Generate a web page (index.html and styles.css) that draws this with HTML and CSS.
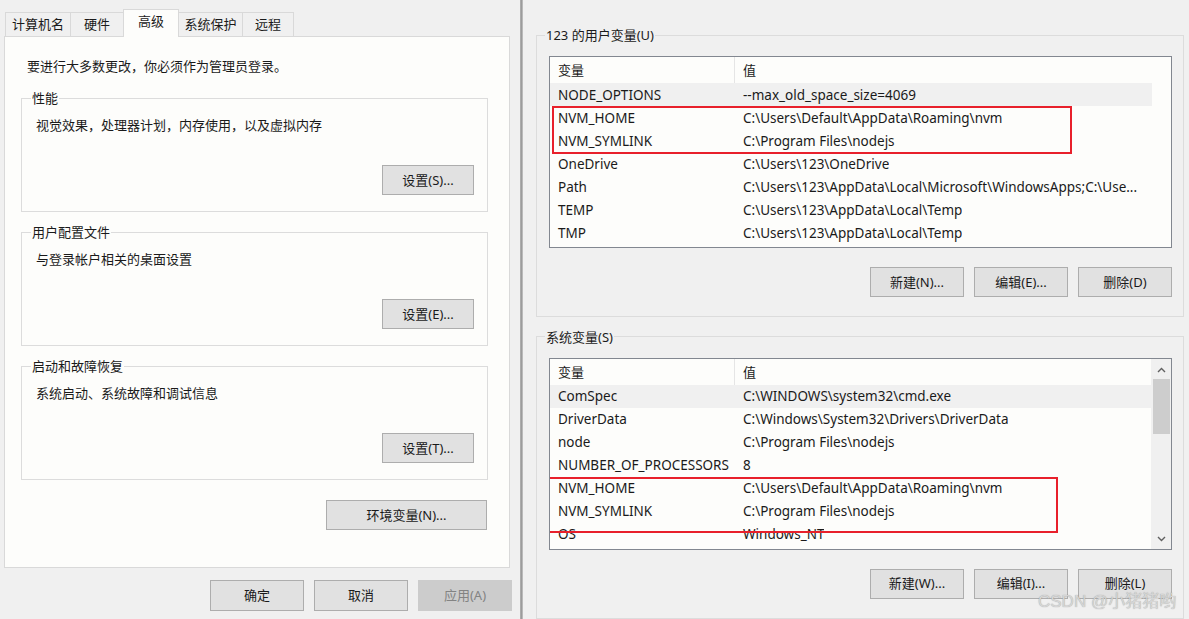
FILE: index.html
```html
<!DOCTYPE html>
<html lang="zh-CN">
<head>
<meta charset="utf-8">
<title>系统属性 - 环境变量</title>
<link rel="stylesheet" href="styles.css">
</head>
<body>
<div class="screen">
  <section class="sysprops">
    <nav class="tabs">
      <span class="tab t1">计算机名</span>
      <span class="tab t2">硬件</span>
      <span class="tab t3 active">高级</span>
      <span class="tab t4">系统保护</span>
      <span class="tab t5">远程</span>
    </nav>
    <div class="tabpage">
      <p class="note">要进行大多数更改，你必须作为管理员登录。</p>
      <fieldset class="group lgroup">
        <legend>性能</legend>
        <p class="desc">视觉效果，处理器计划，内存使用，以及虚拟内存</p>
        <div class="btnrow"><button class="btn set">设置(S)...</button></div>
      </fieldset>
      <fieldset class="group lgroup">
        <legend>用户配置文件</legend>
        <p class="desc">与登录帐户相关的桌面设置</p>
        <div class="btnrow"><button class="btn set">设置(E)...</button></div>
      </fieldset>
      <fieldset class="group lgroup">
        <legend>启动和故障恢复</legend>
        <p class="desc">系统启动、系统故障和调试信息</p>
        <div class="btnrow"><button class="btn set">设置(T)...</button></div>
      </fieldset>
      <div class="envrow"><button class="btn env">环境变量(N)...</button></div>
    </div>
    <div class="dlgbtns">
      <button class="btn dlg">确定</button>
      <button class="btn dlg">取消</button>
      <button class="btn dlg disabled">应用(A)</button>
    </div>
  </section>
  <div class="splitter"></div>
  <section class="envvars">
    <fieldset class="group rgroup user">
      <legend>123 的用户变量(U)</legend>
      <div class="list">
        <div class="lrow head"><span class="c1">变量</span><span class="c2">值</span></div>
        <div class="lrow sel"><span class="c1">NODE_OPTIONS</span><span class="c2">--max_old_space_size=4069</span></div>
        <div class="lrow"><span class="c1">NVM_HOME</span><span class="c2">C:\Users\Default\AppData\Roaming\nvm</span></div>
        <div class="lrow"><span class="c1">NVM_SYMLINK</span><span class="c2">C:\Program Files\nodejs</span></div>
        <div class="lrow"><span class="c1">OneDrive</span><span class="c2">C:\Users\123\OneDrive</span></div>
        <div class="lrow"><span class="c1">Path</span><span class="c2">C:\Users\123\AppData\Local\Microsoft\WindowsApps;C:\Use...</span></div>
        <div class="lrow"><span class="c1">TEMP</span><span class="c2">C:\Users\123\AppData\Local\Temp</span></div>
        <div class="lrow"><span class="c1">TMP</span><span class="c2">C:\Users\123\AppData\Local\Temp</span></div>
        <div class="mark mark-user"></div>
      </div>
      <div class="actions">
        <button class="btn act">新建(N)...</button>
        <button class="btn act">编辑(E)...</button>
        <button class="btn act">删除(D)</button>
      </div>
    </fieldset>
    <fieldset class="group rgroup sys">
      <legend>系统变量(S)</legend>
      <div class="list">
        <div class="lrow head"><span class="c1">变量</span><span class="c2">值</span></div>
        <div class="lrow sel"><span class="c1">ComSpec</span><span class="c2">C:\WINDOWS\system32\cmd.exe</span></div>
        <div class="lrow"><span class="c1">DriverData</span><span class="c2">C:\Windows\System32\Drivers\DriverData</span></div>
        <div class="lrow"><span class="c1">node</span><span class="c2">C:\Program Files\nodejs</span></div>
        <div class="lrow"><span class="c1">NUMBER_OF_PROCESSORS</span><span class="c2">8</span></div>
        <div class="lrow"><span class="c1">NVM_HOME</span><span class="c2">C:\Users\Default\AppData\Roaming\nvm</span></div>
        <div class="lrow"><span class="c1">NVM_SYMLINK</span><span class="c2">C:\Program Files\nodejs</span></div>
        <div class="lrow"><span class="c1">OS</span><span class="c2">Windows_NT</span></div>
        <div class="scrollbar">
          <svg class="arrow" width="9" height="6" viewBox="0 0 9 6"><path d="M1 5 L4.5 1.5 L8 5" fill="none" stroke="#606060" stroke-width="1.4"/></svg>
          <div class="thumb"></div>
          <div class="track"></div>
          <svg class="arrow" width="9" height="6" viewBox="0 0 9 6"><path d="M1 1 L4.5 4.5 L8 1" fill="none" stroke="#606060" stroke-width="1.4"/></svg>
        </div>
        <div class="mark mark-sys"></div>
      </div>
      <div class="actions">
        <button class="btn act">新建(W)...</button>
        <button class="btn act">编辑(I)...</button>
        <button class="btn act">删除(L)</button>
      </div>
    </fieldset>
    <div class="watermark">CSDN @小猪猪哟</div>
  </section>
</div>
</body>
</html>
```
FILE: styles.css
```css
* { box-sizing: border-box; }
html, body { margin: 0; padding: 0; }
body {
  width: 1189px;
  height: 619px;
  overflow: hidden;
  background: #f0f0f0;
  font-family: "Noto Sans", "Noto Sans CJK SC", sans-serif;
  font-size: 13px;
  color: #1a1a1a;
}
p { margin: 0; }

.screen {
  display: flex;
  width: 1189px;
  height: 619px;
}

/* ---------- left: system properties ---------- */
.sysprops {
  width: 520px;
  flex: none;
  padding: 0 0 0 4px;
  display: flex;
  flex-direction: column;
}
.tabs {
  display: flex;
  height: 36px;
  align-items: flex-end;
  padding-left: 1px;
}
.tab {
  height: 24px;
  border: 1px solid #d9d9d9;
  border-bottom: none;
  margin-right: -1px;
  background: #f0f0f0;
  display: flex;
  align-items: center;
  justify-content: center;
  font-size: 13px;
  line-height: 1;
}
.t1 { width: 66px; }
.t2 { width: 54px; }
.t3 { width: 56px; }
.t4 { width: 65px; }
.t5 { width: 52px; }
.tab.active {
  height: 28px;
  background: #fdfdfb;
  margin-bottom: -1px;
  position: relative;
  z-index: 1;
  align-items: flex-start;
  padding-top: 5px;
}
.tabpage {
  width: 506px;
  height: 532px;
  background: #fdfdfb;
  border: 1px solid #d9d9d9;
  padding: 20px 22px 0 16px;
}
.note {
  padding-left: 6px;
  line-height: 18px;
  height: 18px;
}
.group {
  margin: 0;
  border: 1px solid #dcdcdc;
  padding: 0;
}
.group legend {
  padding: 0 1px;
  margin-left: -4px;
  line-height: 14px;
  font-size: 13px;
}
.lgroup {
  width: 467px;
  height: 121px;
  margin-top: 13px;
  padding: 12px 13px 0 13px;
  display: flex;
  flex-direction: column;
}
.lgroup:first-of-type { margin-top: 16px; }
.lgroup .desc { line-height: 16px; padding-left: 1px; }
.btnrow {
  display: flex;
  justify-content: flex-end;
  margin-top: 32px;
}
.btn {
  font-family: "Noto Sans", "Noto Sans CJK SC", sans-serif;
  font-size: 13px;
  color: #1a1a1a;
  background: #e1e1e1;
  border: 1px solid #adadad;
  border-radius: 0;
  padding: 0;
  height: 30px;
  line-height: 1;
}
.set { width: 92px; }
.envrow {
  display: flex;
  justify-content: flex-end;
  margin-top: 20px;
}
.env { width: 161px; }
.dlgbtns {
  display: flex;
  justify-content: flex-end;
  gap: 10px;
  padding: 12px 8px 0 0;
}
.dlg { width: 94px; height: 31px; }
.dlg.disabled {
  background: #cccccc;
  border-color: #cccccc;
  color: #838383;
}

/* ---------- splitter ---------- */
.splitter {
  width: 3px;
  flex: none;
  background: linear-gradient(to right, #b4b4b4, #9c9c9c 50%, #c8c8c8);
}

/* ---------- right: environment variables ---------- */
.envvars {
  flex: 1;
  position: relative;
  padding: 28px 5px 0 13px;
  display: flex;
  flex-direction: column;
}
.rgroup {
  width: 648px;
  padding: 14px 0 0 12px;
}
.user { height: 289px; }
.sys { height: 290px; margin-top: 13px; }

.list {
  position: relative;
  width: 623px;
  height: 192px;
  background: #fdfdfb;
  border: 1px solid #828790;
  overflow: hidden;
  font-size: 13.5px;
}
.lrow {
  display: flex;
  height: 23px;
  width: 602px;
  align-items: center;
  white-space: nowrap;
}
.lrow.head { height: 26px; font-size: 13px; }
.lrow.sel { background: #f0f0f0; }
.c1 {
  width: 185px;
  padding-left: 8px;
  flex: none;
  overflow: hidden;
}
.c2 {
  padding-left: 8px;
  overflow: hidden;
}
.head .c1 { border-right: 1px solid #e5e5e5; height: 26px; line-height: 26px; }
.head .c2 { line-height: 26px; }

.mark {
  position: absolute;
  border: 2px solid #e8202b;
}
.mark-user { left: 2px; top: 49px; width: 520px; height: 48px; }
.mark-sys { left: -2px; top: 118px; width: 510px; height: 56px; }

.scrollbar {
  position: absolute;
  right: 0;
  top: 0;
  width: 20px;
  height: 190px;
  background: #f0f0f0;
  display: flex;
  flex-direction: column;
  align-items: center;
}
.scrollbar .arrow { margin-top: 8px; flex: none; }
.scrollbar .arrow:last-child { margin-top: 0; margin-bottom: 7px; }
.thumb {
  width: 17px;
  height: 55px;
  background: #cdcdcd;
  margin-top: 6px;
  flex: none;
}
.track { flex: 1; }

.actions {
  display: flex;
  justify-content: flex-end;
  gap: 10px;
  width: 623px;
  margin-top: 19px;
}
.act { width: 94px; }

.watermark {
  position: absolute;
  left: 515px;
  top: 587px;
  font-size: 17px;
  color: #d6d6d6;
  text-shadow: 0 0 1px rgba(90, 90, 90, 0.55);
  font-family: "Liberation Sans", "Noto Sans CJK SC", sans-serif;
}
```
